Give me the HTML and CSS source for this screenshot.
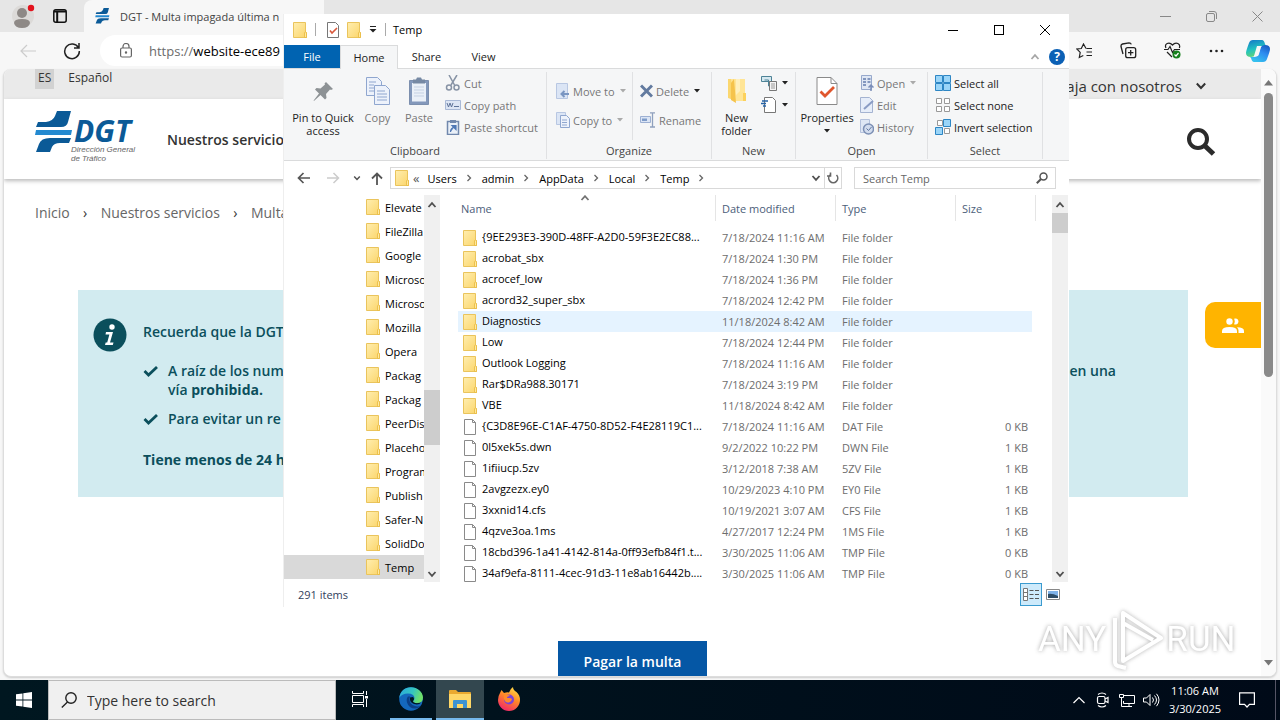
FILE: index.html
```html
<!DOCTYPE html>
<html lang="es">
<head>
<meta charset="utf-8">
<title>DGT - Multa impagada</title>
<link rel="stylesheet" href="styles.css">
</head>
<body>
<svg class="defs" aria-hidden="true">
  <linearGradient id="gFolder" x1="0" y1="0" x2="1" y2="1"><stop offset="0" stop-color="#ffeeb0"/><stop offset="1" stop-color="#fbd56a"/></linearGradient>
  <linearGradient id="gEdge" x1="0" y1="0" x2="1" y2="0.3"><stop offset="0" stop-color="#2aa6e0"/><stop offset="0.6" stop-color="#35c6c0"/><stop offset="1" stop-color="#6ee06a"/></linearGradient>
  <linearGradient id="gFox" x1="0.8" y1="0" x2="0.3" y2="1"><stop offset="0" stop-color="#ffe14a"/><stop offset="0.45" stop-color="#ff8a26"/><stop offset="1" stop-color="#f0256b"/></linearGradient>
  <linearGradient id="gCopA" x1="0" y1="0" x2="0.3" y2="1"><stop offset="0" stop-color="#1473c8"/><stop offset="0.6" stop-color="#22c3c0"/><stop offset="1" stop-color="#5fd37a"/></linearGradient>
  <linearGradient id="gCopB" x1="1" y1="0" x2="0.4" y2="1"><stop offset="0" stop-color="#1450b8"/><stop offset="0.5" stop-color="#2d8cf0"/><stop offset="1" stop-color="#35c0ee"/></linearGradient>
  <symbol id="folder" viewBox="0 0 14 16"><path d="M.5.5h12v9l1 1v5H.5z" fill="url(#gFolder)" stroke="#eac45c"/><path d="M11.500 15.500v-4.500l1-1.500 1 1.500v4.500z" fill="#ffe9a0" stroke="#e8b93e" stroke-width=".8"/></symbol>
  <symbol id="file" viewBox="0 0 14 16"><path d="M1.500.5h8l3 3v12h-11z" fill="#fff" stroke="#8a8a8a"/><path d="M9.500.5v3h3" fill="none" stroke="#8a8a8a"/></symbol>
  <symbol id="up" viewBox="0 0 10 10"><path d="M1.500 7 5 3.200 8.500 7" fill="none" stroke="#505050" stroke-width="1.800"/></symbol>
  <symbol id="down" viewBox="0 0 10 10"><path d="M1.500 3 5 6.800 8.500 3" fill="none" stroke="#505050" stroke-width="1.800"/></symbol>
  <symbol id="right" viewBox="0 0 10 10"><path d="M3.500 2 6.500 5 3.500 8" fill="none" stroke="#666" stroke-width="1.300"/></symbol>
  <symbol id="tri" viewBox="0 0 6 4"><path d="M0 0h6L3 3.500z" fill="currentColor"/></symbol>
  <symbol id="tick" viewBox="0 0 16 12"><path d="M1.500 6 5.500 10 14 2" fill="none" stroke="#0b4f5c" stroke-width="2.800"/></symbol>
  <symbol id="dgt" viewBox="35 111 38 42"><path d="M57 111H71L68 122Q67 127 61 127H36L38 122H46Q53 121 55 116Z" fill="#0b5a97"/><path d="M36 130H72L71 135H35Z" fill="#2389d0"/><path d="M71 138H50Q41 138 39 144L36 152H50L52 147Q54 143 60 143H69Z" fill="#0b5a97"/></symbol>
</svg>
<div class="desktop">
  <div class="browser">
    <header class="tabstrip">
      <div class="tab-tools">
        <button aria-label="Profile"><svg width="24" height="24" viewBox="0 0 24 24"><circle cx="12" cy="12" r="11" fill="#dcdad8"/><circle cx="11" cy="9" r="5" fill="#8e8986"/><path d="M3 19q0-4 8-4t8 4q-1 5-8 5t-8-5z" fill="#8e8986"/><circle cx="20" cy="4" r="3.200" fill="#e3131d"/></svg></button>
        <button aria-label="Tab actions"><svg width="14" height="14" viewBox="0 0 14 14"><rect x=".8" y=".8" width="12.400" height="12.400" rx="2" fill="none" stroke="#111" stroke-width="1.500"/><path d="M1 2.500h12M4.200 3v10" stroke="#111" stroke-width="2"/></svg></button>
      </div>
      <div class="tab"><svg width="15" height="16"><use href="#dgt"/></svg><span>DGT - Multa impagada última n</span></div>
      <div class="win-ctl">
        <button aria-label="Minimize"><svg width="11" height="11"><path d="M0 5.500h11" stroke="#888"/></svg></button>
        <button aria-label="Restore"><svg width="11" height="11" fill="none" stroke="#888"><rect x=".5" y="2.500" width="8" height="8" rx="1.500"/><path d="M3 .5h5q2.500 0 2.500 2.500v5"/></svg></button>
        <button aria-label="Close"><svg width="11" height="11"><path d="M.5.5l10 10M10.500.5l-10 10" stroke="#888"/></svg></button>
      </div>
    </header>
    <div class="toolbar">
      <button aria-label="Back"><svg width="16" height="14" fill="none" stroke="#ccc" stroke-width="1.200"><path d="M16 7H1M7 1 1 7l6 6"/></svg></button>
      <button aria-label="Refresh" class="refresh"><svg width="18" height="18" fill="none" stroke="#222" stroke-width="1.500"><path d="M15.500 6A7.300 7.300 0 1 0 16.300 9M16 1v5h-5"/></svg></button>
      <div class="omnibox"><svg width="12" height="15" fill="none" stroke="#666" stroke-width="1.200"><rect x=".6" y="5" width="10.800" height="9" rx="1.500"/><path d="M3 5V3.500a3 3 0 0 1 6 0V5"/><circle cx="6" cy="9.500" r=".6" fill="#666"/></svg><span class="url"><span>https://</span>website-ece89</span></div>
      <div class="tb-icons">
        <button aria-label="Favorites"><svg width="17" height="16" fill="none" stroke="#222" stroke-width="1.200"><path d="M10 5.500 7.500 1 5.300 5.500.8 6l3.400 3.400L3.300 14.500l4-2M10.500 5.500H16M10.500 9H16M10.500 12.500H16"/></svg></button>
        <button aria-label="Collections"><svg width="17" height="17" fill="none" stroke="#222" stroke-width="1.300"><rect x="5.700" y="5.700" width="10" height="10" rx="2"/><path d="M10.700 8v5.400M8 10.700h5.400M3 12 1 4.500Q.7 2.500 2.500 2L9 .8q1.800 0 2.300 1.600"/></svg></button>
        <button aria-label="Browser essentials"><svg width="17" height="17" fill="none" stroke="#222" stroke-width="1.200"><path d="M2 6C0 2 5-1 8.500 3 12-1 17 2 15.300 6M0 7.500h4l2-3 2.500 6 2-3H16M3 10l5 5"/><circle cx="12.500" cy="12.500" r="4" fill="#16801c" stroke="none"/><path d="m10.500 12.500 1.500 1.500 2.500-3" stroke="#fff"/></svg></button>
        <button aria-label="More"><svg width="15" height="4" fill="#222"><circle cx="2" cy="2" r="1.300"/><circle cx="7.500" cy="2" r="1.300"/><circle cx="13" cy="2" r="1.300"/></svg></button>
        <button aria-label="Copilot"><svg width="24" height="24" viewBox="0 0 24 24"><path d="M7 1h9q2 0 3 4l1 2h-5q-3 0-4 3l-2 6q-1 2-4 2-5 0-5-4 0-2 3-10 1-3 4-3z" fill="url(#gCopA)"/><path d="M17 23H8q-2 0-3-4l-1-1h4q4 0 5-3l2-7q1-2 4-2 5 0 5 4 0 2-3 10-1 3-4 3z" fill="url(#gCopB)"/><path d="M11 7h4l-3 10H8z" fill="#f7f7f7"/></svg></button>
      </div>
    </div>
    <div class="viewport">
      <div class="page">
        <div class="langbar">
          <nav><a class="es" href="#">ES</a><a href="#">Español</a></nav>
          <a class="join" href="#">Trabaja con nosotros <svg width="10" height="8" fill="none" stroke="#333" stroke-width="2"><path d="M.8 1.500 5 6l4.200-4.500"/></svg></a>
        </div>
        <header class="site-head">
          <a class="logo" href="#"><svg width="38" height="42"><use href="#dgt"/></svg><span class="logo-text"><b>DGT</b><i>Dirección General</i><i>de Tráfico</i></span></a>
          <a class="menu" href="#">Nuestros servicios</a>
          <button class="find" aria-label="Buscar"><svg width="30" height="30" fill="none" stroke="#2b2b2b"><circle cx="12" cy="12" r="9" stroke-width="4"/><path d="m18.500 18.500 9 8.500" stroke-width="5"/></svg></button>
        </header>
        <nav class="crumbs"><a href="#">Inicio</a><span>›</span><a href="#">Nuestros servicios</a><span>›</span><a href="#">Multas</a></nav>
        <section class="notice">
          <svg class="info" width="34" height="34"><circle cx="17" cy="17" r="16.500" fill="#0b4f5c"/><circle cx="19" cy="9" r="2.700" fill="#fff"/><path d="M13 14h7l-3 10.500h3.500l-.7 2.500H12l.7-2.500h1.500l2.200-8H12.500z" fill="#fff"/></svg>
          <div class="notice-body">
            <p>Recuerda que la DGT</p>
            <ul>
              <li><svg width="16" height="12"><use href="#tick"/></svg><div><span class="split"><span>A raíz de los num</span><span>en una</span></span>vía <b>prohibida.</b></div></li>
              <li><svg width="16" height="12"><use href="#tick"/></svg><div>Para evitar un re</div></li>
            </ul>
            <p class="strong">Tiene menos de 24 h</p>
          </div>
        </section>
        <button class="pay">Pagar la multa</button>
        <button class="people" aria-label="Contacto"><svg width="22" height="15" fill="#fff"><circle cx="7.500" cy="3.500" r="3.200"/><path d="M0 15v-2q0-4 7.500-4t7.500 4v2zM16.500 15v-2.500q0-2-1.500-3.200 7 0 7 3.700v2zM12 .8q4-1.200 4.500 2.700-.5 4-4.500 2.700 1.500-2.700 0-5.400z"/></svg></button>
      </div>
      <div class="page-scroll"><svg width="9" height="6"><path d="M0 5.500h9L4.500 0z" fill="#777"/></svg><span></span><svg width="9" height="6"><path d="M0 0h9L4.500 5.500z" fill="#777"/></svg></div>
    </div>
  </div>

  <div class="explorer">
    <header class="ex-title">
      <svg width="14" height="16"><use href="#folder"/></svg><i></i>
      <svg class="prop" width="12" height="16" fill="none"><path d="M.5.5h8l3 3v12H.5z" fill="#fff" stroke="#777"/><path d="m3 8.500 2 2.500 5-5" stroke="#d9583b" stroke-width="1.600"/></svg>
      <svg width="14" height="16"><use href="#folder"/></svg>
      <svg width="8" height="7"><path d="M1 .5h6" stroke="#222"/><path d="M.5 3h7L4 6.500z" fill="#222"/></svg><i></i>
      <span>Temp</span>
      <div class="ex-ctl">
        <button aria-label="Minimize"><svg width="10" height="10"><path d="M0 5.500h10" stroke="#000"/></svg></button>
        <button aria-label="Maximize"><svg width="10" height="10"><rect x=".5" y=".5" width="9" height="9" fill="none" stroke="#000"/></svg></button>
        <button aria-label="Close"><svg width="10" height="10"><path d="m0 0 10 10M10 0 0 10" stroke="#000"/></svg></button>
      </div>
    </header>
    <nav class="ex-tabs">
      <button class="t-file">File</button><button class="t-home">Home</button><button>Share</button><button>View</button>
      <span class="ex-help"><svg width="10" height="10" opacity=".5"><use href="#up"/></svg><button aria-label="Help">?</button></span>
    </nav>
    <div class="ribbon">
      <section class="g-clip">
        <div class="tools">
          <button class="big w-pin"><svg width="26" height="30" viewBox="0 0 26 30"><path d="m16 6 7 7-2 1-1-.5-4 4.500.5 4-1.500 1.500-4.500-4.500-6 5.500-1 .5.5-1L9 17.500 5 13.500 6.500 12l4 .5 4.500-4-.5-1z" fill="#8d9295"/></svg>Pin to Quick access</button>
          <button class="big dim w-copy"><svg width="26" height="30" viewBox="0 0 26 30"><g fill="#edf2fb" stroke="#8fa6cf"><path d="M1.500 1.500h11l4 4v14h-15z"/><path d="M4 6h7M4 9h5M4 12h5M4 15h5"/><path d="M9.500 9.500h11l4 4v15h-15z"/><path d="M12 15h8M12 18h10M12 21h10M12 24h10"/></g></svg>Copy</button>
          <button class="big dim w-paste"><svg width="22" height="30" viewBox="0 0 22 30"><path d="M1.500 4.500h19v24h-19z" fill="#8398bb" stroke="#7c8fae"/><path d="M4 7h14v18.500H4z" fill="#eaf0f8"/><path d="M5 3.500h3l1-2h4l1 2h3v4H5z" fill="#7689a4"/><path d="M6 11h10M6 14h10M6 17h10M6 20h10" stroke="#c5d1e3"/></svg>Paste</button>
          <div class="smalls dim">
            <button><svg width="16" height="16" fill="none" stroke="#8793a5" stroke-width="1.500"><path d="M4 0l5.500 10M12 0 6 10"/><circle cx="4" cy="12.500" r="2.500"/><circle cx="11.500" cy="12.500" r="2.500"/></svg>Cut</button>
            <button><svg width="16" height="16"><path d="M.5 3.500h15v9H.5z" fill="#dce5f4" stroke="#a9b9d6"/><path d="m2 6 1.500 4L5 6l1.500 4L8 6M9 9.500h5" stroke="#5f7499" fill="none"/></svg>Copy path</button>
            <button><svg width="16" height="16"><path d="M2.500 2.500h11v13h-11z" fill="#eaf0f8" stroke="#7188ad" stroke-width="1.500"/><path d="M5 1h6v3H5z" fill="#7188ad"/><path d="M5.500 13q0-4 4-5M7 6.500h4v4z" fill="#4f78b5" stroke="#4f78b5" stroke-width="1.200"/></svg>Paste shortcut</button>
          </div>
        </div><h2>Clipboard</h2>
      </section>
      <section class="g-org">
        <div class="tools">
          <div class="mids dim">
            <button><svg width="14" height="16"><path d="M.5.5h11v15H.5z" fill="#dbe5f5" stroke="#b8c7e2"/><path d="M13 11H6M8.500 8 5.500 11l3 3" stroke="#7a96c2" stroke-width="2" fill="none"/></svg>Move to<svg class="tri" width="6" height="4"><use href="#tri"/></svg></button>
            <button><svg width="14" height="16"><path d="M.5.5h9v12h-9z" fill="#dbe5f5" stroke="#b8c7e2"/><path d="M4.500 3.500h6l3 3v9h-9z" fill="#edf2fb" stroke="#8fa6cf"/><path d="M6 8h5M6 10.500h5M6 13h5" stroke="#8fa6cf"/></svg>Copy to<svg class="tri" width="6" height="4"><use href="#tri"/></svg></button>
          </div>
          <div class="mids second">
            <button><svg width="13" height="14"><path d="m1 1.500 11 11M12 1.500l-11 11" stroke="#627a9f" stroke-width="3"/></svg>Delete<svg class="tri dark" width="6" height="4"><use href="#tri"/></svg></button>
            <button><svg width="16" height="16"><path d="M.5 4.500h10v6H.5z" fill="#dbe5f5" stroke="#9db0d3"/><path d="M2 6.500h5v2.500H2z" fill="#7f9cc9"/><path d="M10 .8h5M10 15h5M12.500 1v14" stroke="#8ea0bd" stroke-width="1.300"/></svg>Rename</button>
          </div>
        </div><h2>Organize</h2>
      </section>
      <section class="g-new">
        <div class="tools">
          <button class="big w-new"><svg width="22" height="30" viewBox="0 0 22 30"><path d="M2 3h8v22l-8-3z" fill="#fbd76f"/><path d="M5 3h14v22H8z" fill="#ffe596"/><path d="M8 3 5 7v17l5 3z" fill="#f5c34c"/><path d="M10 3h4v12l-4 4z" fill="#fff0bd"/><path d="M17 17h3v8h-3z" fill="#fcd15c"/></svg>New folder</button>
          <div class="smalls icons">
            <button aria-label="New item"><svg width="16" height="16"><path d="M.5 1.500h10v5H.5z" fill="#d5e8f0" stroke="#4d8296"/><path d="M3.500 5h4v6h4" fill="none" stroke="#4d8296"/><path d="M8.500 6.500h7v9h-7z" fill="#f4f4f4" stroke="#777"/><path d="M10 9h4M10 11h4M10 13h4" stroke="#999"/></svg><svg class="tri dark" width="6" height="4"><use href="#tri"/></svg></button>
            <button aria-label="Easy access"><svg width="16" height="16"><path d="M3.500.5h8l3 3v12h-11z" fill="#fff" stroke="#777"/><path d="M1 4h6M0 6.500h5M2 9h3" stroke="#2563a8" stroke-width="1.300"/></svg><svg class="tri dark" width="6" height="4"><use href="#tri"/></svg></button>
          </div>
        </div><h2>New</h2>
      </section>
      <section class="g-open">
        <div class="tools">
          <button class="big w-props"><svg width="22" height="30" viewBox="0 0 22 30"><path d="M1 1.500h14l6 6v21H1z" fill="#fff" stroke="#8a8a8a"/><path d="M15 1.500v6h6" fill="none" stroke="#8a8a8a"/><path d="m4.500 15.500 4.500 4.500 9-9" stroke="#e0562d" stroke-width="2.800" fill="none"/></svg>Properties<svg class="tri dark" width="6" height="4"><use href="#tri"/></svg></button>
          <div class="smalls dim">
            <button><svg width="14" height="16"><path d="M1.500.5h10v14h-10z" fill="#dfe7f4" stroke="#97a9cc"/><path d="M3 4h3M3 7h3M3 10h3M7.500 4h3M7.500 7h3" stroke="#8397bf" stroke-width="2"/><path d="M11 16v-5M8.500 12.500 11 10l2.500 2.500" stroke="#7a8db8" stroke-width="1.500" fill="none"/></svg>Open<svg class="tri" width="6" height="4"><use href="#tri"/></svg></button>
            <button><svg width="14" height="16"><path d="M.5.5h9l3 3v12H.5z" fill="#e6edf9" stroke="#a4b3d1"/><path d="M4 12 13 4" stroke="#8a9cc4" stroke-width="2"/></svg>Edit</button>
            <button><svg width="14" height="16"><path d="M.5.5h9v13h-9z" fill="#dfe7f4" stroke="#b4c1dc"/><circle cx="8.500" cy="10" r="5" fill="#d2dcee" stroke="#7d90b5" stroke-width="1.500"/><path d="M6.500 9.500 8.500 11.500 11.500 8" stroke="#5f769f" fill="none"/></svg>History</button>
          </div>
        </div><h2>Open</h2>
      </section>
      <section class="g-sel">
        <div class="tools">
          <div class="smalls">
            <button><svg width="16" height="16" fill="#9ad5f8" stroke="#2d86c4"><path d="M.5.5h7v7h-7zM8.500.5h7v7h-7zM.5 8.500h7v7h-7zM8.500 8.500h7v7h-7z"/></svg>Select all</button>
            <button><svg width="16" height="16" fill="#fff" stroke="#999"><path d="M1.500 1.500h5v5h-5zM9.500 1.500h5v5h-5zM1.500 9.500h5v5h-5zM9.500 9.500h5v5h-5z"/></svg>Select none</button>
            <button><svg width="16" height="16"><path d="M2.500 1.500h5v5h-5zM9.500 9.500h5v5h-5z" fill="#fff" stroke="#999"/><path d="M8.500.5h7v7h-7zM.5 8.500h7v7h-7z" fill="#9ad5f8" stroke="#2d86c4"/></svg>Invert selection</button>
          </div>
        </div><h2>Select</h2>
      </section>
    </div>
    <div class="ex-addr">
      <button aria-label="Back"><svg width="13" height="12" fill="none" stroke="#555" stroke-width="1.700"><path d="M13 6H1.500M6.500 1l-5 5 5 5"/></svg></button>
      <button aria-label="Forward"><svg width="13" height="12" fill="none" stroke="#ccc" stroke-width="1.500"><path d="M0 6h11.500M6.500 1l5 5-5 5"/></svg></button>
      <button aria-label="Recent" class="narrow"><svg width="8" height="8"><use href="#down"/></svg></button>
      <button aria-label="Up"><svg width="12" height="13" fill="none" stroke="#555" stroke-width="1.800"><path d="M6 13V1.500M1 6.500l5-5 5 5"/></svg></button>
      <div class="path"><svg class="pf" width="14" height="16"><use href="#folder"/></svg><span class="dbl">«</span><a href="#">Users</a><svg width="10" height="10"><use href="#right"/></svg><a href="#">admin</a><svg width="10" height="10"><use href="#right"/></svg><a href="#">AppData</a><svg width="10" height="10"><use href="#right"/></svg><a href="#">Local</a><svg width="10" height="10"><use href="#right"/></svg><a href="#">Temp</a><svg width="10" height="10"><use href="#right"/></svg>
        <button class="drop" aria-label="Previous locations"><svg width="10" height="10"><use href="#down"/></svg></button><button class="re" aria-label="Refresh"><svg width="12" height="12" fill="none" stroke="#666" stroke-width="1.600"><path d="M9.500 3A4.500 4.500 0 1 1 3 3M3.500.500V4H0"/></svg></button></div>
      <label class="search"><input type="text" placeholder="Search Temp" aria-label="Search Temp"><svg width="12" height="12" fill="none" stroke="#555" stroke-width="1.500"><circle cx="7.500" cy="4.500" r="3.500"/><path d="M5 7 .8 11.200" stroke-width="2"/></svg></label>
    </div>
    <div class="ex-main">
      <ul class="tree">
        <li><svg><use href="#folder"/></svg>Elevate</li><li><svg><use href="#folder"/></svg>FileZilla</li><li><svg><use href="#folder"/></svg>Google</li><li><svg><use href="#folder"/></svg>Microso</li><li><svg><use href="#folder"/></svg>Microso</li><li><svg><use href="#folder"/></svg>Mozilla</li><li><svg><use href="#folder"/></svg>Opera</li><li><svg><use href="#folder"/></svg>Packag</li><li><svg><use href="#folder"/></svg>Packag</li><li><svg><use href="#folder"/></svg>PeerDis</li><li><svg><use href="#folder"/></svg>Placeho</li><li><svg><use href="#folder"/></svg>Program</li><li><svg><use href="#folder"/></svg>Publish</li><li><svg><use href="#folder"/></svg>Safer-N</li><li><svg><use href="#folder"/></svg>SolidDo</li><li class="on"><svg><use href="#folder"/></svg>Temp</li>
      </ul>
      <div class="sb sb-tree"><svg width="10" height="10"><use href="#up"/></svg><span></span><svg width="10" height="10"><use href="#down"/></svg></div>
      <div class="list">
        <svg class="sort" width="10" height="10" opacity=".8"><use href="#up"/></svg>
        <table>
          <thead><tr><th class="c1">Name</th><th class="c2">Date modified</th><th class="c2">Type</th><th>Size</th></tr></thead>
          <tbody>
          <tr><td><svg><use href="#folder"/></svg>{9EE293E3-390D-48FF-A2D0-59F3E2EC88...</td><td>7/18/2024 11:16 AM</td><td>File folder</td><td></td></tr>
          <tr><td><svg><use href="#folder"/></svg>acrobat_sbx</td><td>7/18/2024 1:30 PM</td><td>File folder</td><td></td></tr>
          <tr><td><svg><use href="#folder"/></svg>acrocef_low</td><td>7/18/2024 1:36 PM</td><td>File folder</td><td></td></tr>
          <tr><td><svg><use href="#folder"/></svg>acrord32_super_sbx</td><td>7/18/2024 12:42 PM</td><td>File folder</td><td></td></tr>
          <tr class="hover"><td><svg><use href="#folder"/></svg>Diagnostics</td><td>11/18/2024 8:42 AM</td><td>File folder</td><td></td></tr>
          <tr><td><svg><use href="#folder"/></svg>Low</td><td>7/18/2024 12:44 PM</td><td>File folder</td><td></td></tr>
          <tr><td><svg><use href="#folder"/></svg>Outlook Logging</td><td>7/18/2024 11:16 AM</td><td>File folder</td><td></td></tr>
          <tr><td><svg><use href="#folder"/></svg>Rar$DRa988.30171</td><td>7/18/2024 3:19 PM</td><td>File folder</td><td></td></tr>
          <tr><td><svg><use href="#folder"/></svg>VBE</td><td>11/18/2024 8:42 AM</td><td>File folder</td><td></td></tr>
          <tr><td><svg><use href="#file"/></svg>{C3D8E96E-C1AF-4750-8D52-F4E28119C1...</td><td>7/18/2024 11:16 AM</td><td>DAT File</td><td>0 KB</td></tr>
          <tr><td><svg><use href="#file"/></svg>0l5xek5s.dwn</td><td>9/2/2022 10:22 PM</td><td>DWN File</td><td>1 KB</td></tr>
          <tr><td><svg><use href="#file"/></svg>1ifiiucp.5zv</td><td>3/12/2018 7:38 AM</td><td>5ZV File</td><td>1 KB</td></tr>
          <tr><td><svg><use href="#file"/></svg>2avgzezx.ey0</td><td>10/29/2023 4:10 PM</td><td>EY0 File</td><td>1 KB</td></tr>
          <tr><td><svg><use href="#file"/></svg>3xxnid14.cfs</td><td>10/19/2021 3:07 AM</td><td>CFS File</td><td>1 KB</td></tr>
          <tr><td><svg><use href="#file"/></svg>4qzve3oa.1ms</td><td>4/27/2017 12:24 PM</td><td>1MS File</td><td>1 KB</td></tr>
          <tr><td><svg><use href="#file"/></svg>18cbd396-1a41-4142-814a-0ff93efb84f1.t...</td><td>3/30/2025 11:06 AM</td><td>TMP File</td><td>0 KB</td></tr>
          <tr><td><svg><use href="#file"/></svg>34af9efa-8111-4cec-91d3-11e8ab16442b....</td><td>3/30/2025 11:06 AM</td><td>TMP File</td><td>0 KB</td></tr>
          </tbody>
        </table>
      </div>
      <div class="sb sb-list"><svg width="10" height="10"><use href="#up"/></svg><span></span><svg width="10" height="10"><use href="#down"/></svg></div>
    </div>
    <footer class="ex-status"><span>291 items</span>
      <div><button class="v-on" aria-label="Details"><svg width="18" height="14"><path d="M1.500.5h4v12h-4zM1.500 4.500h4M1.500 8.500h4" fill="#fff" stroke="#777"/><path d="M7.500 2.500h4M13 2.500h4M7.500 6.500h4M13 6.500h4M7.500 10.500h4M13 10.500h4" stroke="#555"/></svg></button><button aria-label="Large icons"><svg width="14" height="11"><path d="M.5.5h13v10H.5z" fill="#fff" stroke="#888"/><path d="M2 2h10v7H2z" fill="#7fb2e8"/><path d="M2 5q4-1 10 2v2H2z" fill="#2d4c66"/></svg></button></div>
    </footer>
  </div>

  <div class="mark"><span>ANY</span><svg width="60" height="62" fill="none" stroke="#fff" stroke-width="4" stroke-linejoin="round"><path d="M17 4v48L55 29zM9 9v44q0 3 3 4l8 2M17 14l30 17"/></svg><span>RUN</span></div>

  <footer class="taskbar">
    <button class="start" aria-label="Start"><svg width="16" height="16" fill="#fff"><path d="m0 2.300 6.500-.9v6.200H0zM7.300 1.300 16 0v7.600H7.300zM0 8.400h6.500v6.200L0 13.700zM7.300 8.400H16V16l-8.700-1.300z"/></svg></button>
    <label class="tsearch"><svg width="16" height="16" fill="none" stroke="#222" stroke-width="1.400"><circle cx="10" cy="6" r="5.200"/><path d="M6.500 10 .8 15.500"/></svg><input type="text" placeholder="Type here to search" aria-label="Type here to search"></label>
    <button class="tb" aria-label="Task view"><svg width="17" height="16" fill="none" stroke="#fff"><path d="M.5 0v2.500h11V0M.5 4.500h11v7H.5zM.5 16v-2.500h11V16M14.500 0v4M14.500 8v8"/><path d="M13 5h3v2.500h-3z" fill="#fff" stroke="none"/></svg></button>
    <button class="tb run" aria-label="Edge"><svg width="24" height="24" viewBox="0 0 24 24"><circle cx="12" cy="12" r="11.800" fill="#1468bd"/><path d="M.3 11C1 4 6 .2 12 .2S24 5 24 10.500q0 5.500-6 5.500-4 0-4-2 1.500-1 1.500-3Q15 6.500 9 6.500 2.500 6.500.3 11z" fill="url(#gEdge)"/><path d="M9 9.500q-2 2-1 6 2 6 8 6 4 0 6-3-4 2-8.500-.5-4.500-3-2.500-8.500z" fill="#0b3f86"/><path d="M14 10q2 2 0 4 0 2 4 2.200 2 0 4-.8-2 3-7 1.600-4.500-1.500-4-6.500z" fill="#001720"/></svg></button>
    <button class="tb active" aria-label="File Explorer"><svg width="22" height="20" viewBox="0 0 22 20"><path d="M0 2q0-1 1-1h6l2 2h12q1 0 1 1v15H0z" fill="#eaa92f"/><path d="M0 5h22v14H0z" fill="#ffd767"/><path d="M4 19v-7q0-1 1-1h12q1 0 1 1v7h-4v-4H8v4z" fill="#3f93d2"/></svg></button>
    <button class="tb" aria-label="Firefox"><svg width="24" height="24" viewBox="0 0 24 24"><path d="M3 6l1.500-3L7 6q3-1 5-.5Q13 2 16 0q0 3 3.500 5 3.500 3 3.500 8a11 11 0 0 1-22 0q0-4 2-7z" fill="url(#gFox)"/><circle cx="12" cy="12.500" r="5" fill="#7a42d8"/><path d="M7 8q4-1 6 1-3 0-3 2 4-.5 5 1-1 4-5 3.500-4-1.500-3-7.500z" fill="#ff8a2a"/></svg></button>
    <div class="tray">
      <button aria-label="Hidden icons"><svg width="12" height="8" fill="none" stroke="#fff" stroke-width="1.200"><path d="m.5 7 5.500-5.500L11.500 7"/></svg></button>
      <button aria-label="Meet now"><svg width="14" height="16" fill="none" stroke="#fff" stroke-width="1.200"><rect x="1.500" y="4.500" width="7.500" height="7" rx="1.500"/><path d="m9 7 3-1.500v5L9 9M2 2.500q4-3 8 0M2 13.500q4 3 8 0"/></svg></button>
      <button aria-label="Network"><svg width="16" height="15" fill="none" stroke="#fff"><path d="M5 2.500h10.500v8H4.500V8M7 13.500h6M10 11v2.500M.5 1.500h4v3h-4zM2.500 5v8.500H7"/></svg></button>
      <button aria-label="Volume"><svg width="17" height="14" fill="none" stroke="#fff"><path d="M.5 5v4h3l3.500 3.500v-11L3.500 5zM9.500 4.500q2 2.500 0 5M11.500 2.500q4 4.500 0 9M13.500.8q5 6 0 12.400"/></svg></button>
      <time><span>11:06 AM</span><span>3/30/2025</span></time>
      <button class="note" aria-label="Notifications"><svg width="16" height="16" fill="none" stroke="#fff" stroke-width="1.200"><path d="M.6.8h14.800v11.500H10.500L8 15l-2.500-2.700H.6z"/></svg></button>
    </div>
  </footer>
</div>
</body>
</html>
```
FILE: styles.css
```css
* { box-sizing: border-box; }
body { margin: 0; font-family: "Open Sans", "Noto Sans", sans-serif; }
button { border: 0; padding: 0; background: none; font: inherit; color: inherit; display: flex; align-items: center; justify-content: center; }
a { color: inherit; text-decoration: none; }
ul, p, h2 { margin: 0; padding: 0; list-style: none; font-weight: inherit; }
svg { flex: none; }
input { border: 0; outline: 0; padding: 0; background: none; font: inherit; min-width: 0; flex: 1; }
.defs { position: absolute; width: 0; height: 0; }
.desktop { position: relative; display: flex; flex-direction: column; height: 100vh; overflow: hidden; }

/* Browser */
.browser { flex: 1; min-height: 0; display: flex; flex-direction: column; background: #f7f7f7; }
.tabstrip { height: 32px; flex: none; display: flex; background: #e6e6e6; }
.tab-tools { width: 84px; display: flex; align-items: center; gap: 18px; padding-left: 11px; }
.tab { width: 240px; display: flex; align-items: center; gap: 10px; padding-left: 11px; background: #f7f7f7; border-radius: 8px 0 0 0; font-size: 11px; color: #444; white-space: nowrap; }
.win-ctl { margin-left: auto; display: flex; }
.win-ctl button { width: 46px; }
.toolbar { height: 37px; flex: none; display: flex; align-items: center; padding: 0 2px 0 20px; }
.refresh { margin-left: 27px; }
.omnibox { flex: 1; height: 31px; margin-left: 19px; padding-left: 20px; border-radius: 16px; background: #fff; display: flex; align-items: center; gap: 17px; font-size: 13px; color: #000; }
.url span { color: #6b6b6b; }
.tb-icons { display: flex; padding-left: 20px; }
.tb-icons button { width: 44px; }
.tb-icons button:last-child { width: 40px; }
.viewport { flex: 1; min-height: 0; margin: 0 3px 3px; display: flex; background: #fff; border: 1px solid #ddd; border-top: 0; border-radius: 8px; overflow: hidden; box-shadow: 0 1px 2px #ccc; }
.page { flex: 1; min-width: 0; position: relative; overflow: hidden; }
.page-scroll { width: 15px; background: #fafafa; display: flex; flex-direction: column; align-items: center; padding: 11px 0 10px; }
.page-scroll span { width: 9px; height: 284px; margin: 7px 0 auto; border-radius: 5px; background: #8a8a8a; }

/* Site */
.langbar { height: 30px; padding: 0 55px 0 31px; display: flex; justify-content: space-between; background: #eaeaea; color: #333; }
.langbar nav { display: flex; gap: 14px; font-size: 12px; font-weight: 500; line-height: 18px; }
.es { background: #d2d2d2; height: 20px; padding: 0 3px; }
.join { display: flex; align-items: center; gap: 14px; font-size: 15px; padding-top: 3px; font-weight: 500; }
.site-head { height: 80px; display: flex; align-items: center; padding: 0 45px 0 31px; background: #fff; box-shadow: 0 2px 4px #bbb; }
.logo { display: flex; align-self: flex-start; padding-top: 12px; width: 132px; }
.logo-text { display: flex; flex-direction: column; margin-left: -2px; padding-top: 6px; color: #666; white-space: nowrap; }
.logo-text b { font: italic 700 30px/28px "Open Sans", sans-serif; color: #0b5a97; padding-left: 3px; }
.logo-text i { font: italic 8px/9px "Liberation Sans", sans-serif; }
.menu { font-size: 14px; font-weight: 600; color: #333; }
.find { margin-left: auto; padding-top: 6px; }
.crumbs { display: flex; align-items: center; gap: 11px; padding: 24px 0 0 31px; font-size: 14px; line-height: 20px; color: #666; }
.crumbs span { width: 9px; text-align: center; color: #333; }
.notice { display: flex; gap: 16px; margin: 67px 73px 0 74px; padding: 28px 72px 28px 15px; background: #d2ebf0; color: #0b4f5c; font-size: 14px; line-height: 19px; font-weight: 600; }
.notice-body { flex: 1; padding-top: 4px; }
.notice ul { margin: 20px 0 22px; display: grid; gap: 10px; }
.notice li { display: flex; gap: 9px; }
.notice li svg { margin-top: 4px; }
.notice li div { flex: 1; }
.split { display: flex; justify-content: space-between; }
.notice b, .notice .strong { font-weight: 700; }
.pay { width: 149px; height: 41px; margin: 144px auto 0; background: #0557a5; color: #fff; font-size: 14px; font-weight: 600; }
.people { position: absolute; right: 0; top: 233px; width: 56px; height: 46px; border-radius: 10px 0 0 10px; background: #ffb400; }

/* File window */
.explorer { position: absolute; left: 283px; top: 14px; width: 786px; background: #fff; font-size: 11px; color: #222; border-left: 1px solid #eee; }
.ex-title { height: 31px; display: flex; align-items: center; gap: 8px; padding-left: 9px; color: #000; }
.ex-title i { width: 1px; height: 13px; background: #aaa; margin-right: 3px; }
.ex-title i + span { margin-left: -4px; }
.ex-ctl { margin: 0 1px 0 auto; display: flex; }
.ex-ctl button { width: 46px; height: 30px; }
.ex-tabs { height: 24px; display: flex; border-bottom: 1px solid #dadbdc; }
.ex-tabs > button { width: 57px; }
.ex-tabs .t-file { width: 56px; background: #0063b1; color: #fff; }
.ex-tabs .t-home { width: 58px; height: 24px; background: #f5f6f7; border: 1px solid #dadbdc; border-bottom: 0; }
.ex-help { margin-left: auto; display: flex; align-items: center; gap: 9px; padding-right: 4px; }
.ex-help button { width: 16px; height: 16px; border-radius: 50%; background: #0b60b5; color: #fff; font-weight: 700; font-size: 12px; }
.ribbon { height: 92px; display: flex; background: #f5f6f7; border-bottom: 1px solid #dadbdc; }
.ribbon section { display: flex; flex-direction: column; justify-content: space-between; margin: 3px 0 1px; border-right: 1px solid #e0e1e3; }
.ribbon h2 { font-size: 11px; line-height: 16px; text-align: center; color: #444; }
.tools { display: flex; height: 68px; }
.g-clip { width: 263px; } .g-org { width: 165px; } .g-new { width: 84px; } .g-open { width: 132px; } .g-sel { width: 115px; }
.big { flex-direction: column; justify-content: flex-start; padding-top: 4px; line-height: 13px; gap: 5px; text-align: center; }
.big .tri { margin: 0; }
.w-pin { width: 78px; } .w-copy { width: 31px; } .w-paste { width: 52px; } .w-new { width: 49px; } .w-props { width: 62px; }
.dim, .second { color: #777; }
.smalls { display: flex; flex-direction: column; }
.smalls button { height: 22px; gap: 3px; justify-content: flex-start; white-space: nowrap; }
.g-sel .smalls { padding-left: 7px; }
.g-open .smalls { padding-left: 2px; }
.mids { display: flex; flex-direction: column; gap: 5px; padding: 7px 0 0 9px; width: 85px; }
.mids button { height: 24px; gap: 3px; justify-content: flex-start; white-space: nowrap; }
.second { padding-left: 7px; border-left: 1px solid #e0e1e3; width: 79px; }
.tri { color: #aaa; margin-left: 2px; }
.tri.dark { color: #222; }
.ex-addr { height: 34px; display: flex; align-items: center; padding: 0 13px 0 7px; }
.ex-addr > button { width: 25px; height: 22px; }
.ex-addr > button + button { margin-left: 5px; }
.ex-addr > .narrow { width: 12px; }
.ex-addr > .narrow + button { margin-left: 0; width: 27px; }
.path { flex: 1; height: 22px; display: flex; align-items: center; padding-left: 4px; border: 1px solid #d9d9d9; font-size: 13px; color: #000; }
.path a { padding: 0 7px 0 8px; font-size: 11px; }
.dbl { padding-left: 4px; color: #555; }
.drop { margin-left: auto; width: 16px; }
.re { width: 17px; height: 20px; border-left: 1px solid #d9d9d9; }
.search { width: 202px; height: 22px; margin-left: 12px; padding: 0 7px 0 8px; display: flex; align-items: center; border: 1px solid #d9d9d9; }
.search input::placeholder { color: #666; opacity: 1; }
.ex-main { height: 387px; display: flex; }
.tree { width: 140px; overflow: hidden; color: #000; }
.tree li { height: 24px; padding-left: 82px; display: flex; align-items: center; gap: 5px; white-space: nowrap; overflow: hidden; }
.tree svg, td svg { width: 14px; height: 16px; }
.tree .on { background: #d9d9d9; }
.sb { width: 16px; flex: none; display: flex; flex-direction: column; align-items: center; padding: 5px 0 3px; background: #f0f0f0; }
.sb span { width: 16px; background: #cdcdcd; margin-bottom: auto; }
.sb-tree span { height: 55px; margin-top: 180px; }
.sb-list span { height: 20px; margin-top: 3px; }
.list { flex: 1; overflow: hidden; padding-left: 18px; position: relative; }
.sort { position: absolute; left: 140px; top: -2px; }
table { width: 574px; table-layout: fixed; border-collapse: collapse; color: #6d6d6d; }
th { height: 32px; padding: 0 0 6px 6px; font-weight: 400; text-align: left; color: #4c607a; position: relative; }
th:first-child { padding-left: 3px; }
th::after { content: ""; position: absolute; right: 0; top: 0; width: 1px; height: 26px; background: #e5e5e5; }
th:last-child::after { right: -4px; }
.c1 { width: 258px; } .c2 { width: 120px; }
td { height: 21px; padding: 0 0 0 6px; white-space: nowrap; line-height: 16px; }
td:first-child { color: #000; padding-left: 5px; }
td:last-child { text-align: right; padding-right: 4px; }
td svg { vertical-align: middle; margin-right: 5px; }
.hover { background: #e5f3ff; }
.ex-status { height: 25px; display: flex; justify-content: space-between; align-items: center; padding: 0 5px 0 14px; color: #33415c; }
.ex-status div { display: flex; }
.ex-status button { width: 22px; height: 23px; }
.ex-status .v-on { background: #cdeafb; border: 1px solid #3a9bd0; }
.sb-list { margin-right: 1px; }

/* Watermark */
.mark { position: absolute; left: 1038px; top: 609px; display: flex; align-items: center; color: #fff; opacity: .9; font: 35px/62px "Liberation Sans Narrow", Roboto, sans-serif; text-shadow: 0 0 4px #999; }
.mark svg { filter: drop-shadow(0 0 2px #aaa); }

/* Taskbar */
.taskbar { height: 40px; flex: none; display: flex; background: linear-gradient(90deg, #001720, #000a18); color: #fff; }
.start { width: 48px; }
.tsearch { width: 288px; display: flex; align-items: center; gap: 10px; padding-left: 12px; background: #f0f0f0; border: 1px solid #bbb; font-size: 14px; }
.tsearch input::placeholder { color: #333; opacity: 1; }
.tb { width: 48px; margin-right: 1px; border-bottom: 2px solid transparent; }
.run { margin-left: 2px; border-image: linear-gradient(90deg, transparent 10%, #76b9ed 10%, #76b9ed 90%, transparent 90%) 2; }
.active { background: #33474f; border-color: #76b9ed; }
.tray { margin-left: auto; display: flex; align-items: center; margin-right: 4px; border-right: 1px solid #556; }
.tray button { width: 24px; height: 40px; }
.tray time { width: 64px; display: flex; flex-direction: column; align-items: center; font-size: 11px; line-height: 18px; }
.tray .note { width: 40px; margin-right: 8px; }
```
